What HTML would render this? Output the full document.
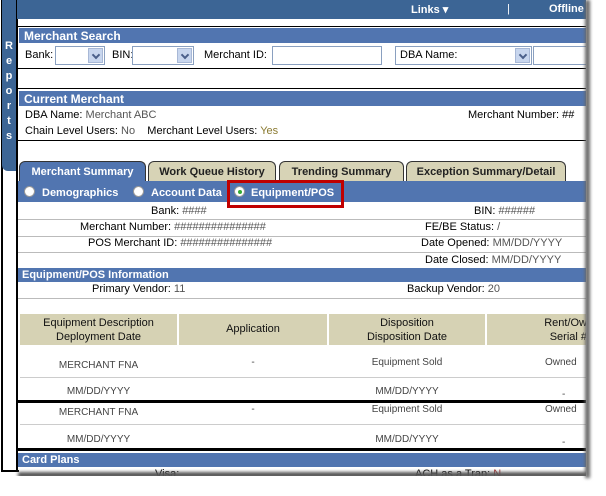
<!DOCTYPE html>
<html><head><style>
*{margin:0;padding:0;box-sizing:border-box}
body{width:606px;height:496px;background:#fff;position:relative;overflow:hidden;font-family:"Liberation Sans",Arial,sans-serif;font-size:11px;color:#000}
.a{position:absolute;white-space:nowrap}
.blue{background:#5175b0;color:#fff;font-weight:bold;font-size:11px}
.top{background:#3c6595}
.b{font-weight:bold}
.g{color:#555}
.sel{position:absolute;height:19px;border:1px solid #8aa0c0;background:#fff}
.sel i{position:absolute;right:1px;top:1px;width:15px;height:15px;background:#c8d6ee;border:1px solid #a8b8d6}
.sel i:after{content:"";position:absolute;left:4px;top:3px;width:4px;height:4px;border-right:2px solid #4a5f8a;border-bottom:2px solid #4a5f8a;transform:rotate(45deg)}
.inp{position:absolute;height:19px;border:1px solid #8aa0c0;background:#fff}
.hl{position:absolute;height:1px;background:#bbb}
.tab{position:absolute;top:161px;height:21px;background:#d7d3b6;border:1px solid #333;border-bottom:none;border-radius:6px 6px 0 0;font-weight:bold;font-size:11px;text-align:center;line-height:20px;color:#222}
.rad{position:absolute;top:186px;width:11px;height:11px;border-radius:50%;background:#fff;border:1px solid #999}
.th{position:absolute;top:314px;height:31px;background:#d6d2b4;text-align:center;font-size:11px;line-height:14px;padding-top:2px;color:#111}
.c{position:absolute;text-align:center;font-size:10px;color:#444}
.bl{position:absolute;height:3px;background:#000;left:18px;width:568px}
</style></head><body>
<div class="a" style="left:1px;top:0;width:2px;height:472px;background:#000"></div>
<div class="a" style="left:1px;top:470px;width:18px;height:2px;background:#000"></div>
<div class="a top" style="left:2px;top:0;width:14px;height:171px;border-radius:0 0 0 6px"></div>
<div class="a" style="left:3px;top:39px;width:12px;color:#fff;font-weight:bold;font-size:11px;line-height:15px;text-align:center;white-space:normal">R<br>e<br>p<br>o<br>r<br>t<br>s</div>
<div class="a" style="left:16px;top:0;width:2px;height:472px;background:#000"></div>
<div class="a top" style="left:17px;top:0;width:570px;height:19px"></div>
<div class="a b" style="left:411px;top:3px;color:#fff;font-size:11px">Links &#9662;</div>
<div class="a" style="left:507px;top:3px;color:#fff">|</div>
<div class="a b" style="left:549px;top:3px;color:#fff;font-size:11px">Offline</div>
<div class="a" style="left:17px;top:26px;width:570px;height:43px;border:1px solid #000;border-right:none"></div>
<div class="a blue" style="left:19px;top:28px;width:568px;height:15px;padding:1px 5px;font-size:12px">Merchant Search</div>
<div class="a" style="left:25px;top:49px">Bank:</div>
<div class="sel" style="left:55px;top:46px;width:50px"><i></i></div>
<div class="a" style="left:112px;top:49px">BIN:</div>
<div class="sel" style="left:132px;top:46px;width:62px"><i></i></div>
<div class="a" style="left:204px;top:49px">Merchant ID:</div>
<div class="inp" style="left:272px;top:46px;width:110px"></div>
<div class="sel" style="left:395px;top:46px;width:137px"><i></i></div>
<div class="a" style="left:400px;top:49px">DBA Name:</div>
<div class="inp" style="left:533px;top:46px;width:60px"></div>
<div class="a" style="left:17px;top:88px;width:570px;height:53px;border:1px solid #000;border-right:none"></div>
<div class="a blue" style="left:19px;top:91px;width:568px;height:15px;padding:1px 5px;font-size:12px">Current Merchant</div>
<div class="a" style="left:25px;top:109px">DBA Name: <span class="g">Merchant ABC</span></div>
<div class="a" style="left:468px;top:109px">Merchant Number: ##</div>
<div class="a" style="left:25px;top:125px">Chain Level Users: <span class="g">No</span>&nbsp;&nbsp;&nbsp; Merchant Level Users: <span style="color:#8a7a30">Yes</span></div>
<div class="tab" style="left:19px;width:127px;background:#5175b0;color:#fff">Merchant Summary</div>
<div class="tab" style="left:148px;width:128px">Work Queue History</div>
<div class="tab" style="left:279px;width:125px">Trending Summary</div>
<div class="tab" style="left:406px;width:160px">Exception Summary/Detail</div>
<div class="a blue" style="left:18px;top:181px;width:569px;height:21px"></div>
<div class="rad" style="left:24px"></div><div class="a b" style="left:42px;top:187px;color:#fff">Demographics</div>
<div class="rad" style="left:133px"></div><div class="a b" style="left:151px;top:187px;color:#fff">Account Data</div>
<div class="rad" style="left:234px"></div><div class="a" style="left:238px;top:190px;width:4px;height:4px;border-radius:50%;background:#3a3"></div>
<div class="a b" style="left:251px;top:187px;color:#fff">Equipment/POS</div>
<div class="a" style="left:227px;top:180px;width:117px;height:28px;border:3px solid #c00000"></div>
<div class="a" style="left:151px;top:205px">Bank: <span class="g">####</span></div>
<div class="a" style="left:474px;top:205px">BIN: <span class="g">######</span></div>
<div class="hl" style="left:18px;top:219px;width:568px"></div>
<div class="a" style="left:80px;top:221px">Merchant Number: <span class="g">###############</span></div>
<div class="a" style="left:425px;top:221px">FE/BE Status: <span class="g">/</span></div>
<div class="hl" style="left:18px;top:236px;width:568px"></div>
<div class="a" style="left:88px;top:237px">POS Merchant ID: <span class="g">###############</span></div>
<div class="a" style="left:421px;top:237px">Date Opened: <span class="g">MM/DD/YYYY</span></div>
<div class="hl" style="left:18px;top:252px;width:568px"></div>
<div class="a" style="left:425px;top:254px">Date Closed: <span class="g">MM/DD/YYYY</span></div>
<div class="a blue" style="left:18px;top:268px;width:569px;height:14px;padding:0 4px;line-height:14px">Equipment/POS Information</div>
<div class="a" style="left:92px;top:283px">Primary Vendor: <span class="g">11</span></div>
<div class="a" style="left:407px;top:283px">Backup Vendor: <span class="g">20</span></div>
<div class="hl" style="left:18px;top:298px;width:568px"></div>
<div class="th" style="left:20px;width:157px">Equipment Description<br>Deployment Date</div>
<div class="th" style="left:179px;width:148px;line-height:30px;padding:0">Application</div>
<div class="th" style="left:329px;width:156px">Disposition<br>Disposition Date</div>
<div class="th" style="left:487px;width:100px;text-align:right">Rent/Ow<br>Serial #</div>
<div class="c" style="left:20px;width:157px;top:360px">MERCHANT FNA</div>
<div class="c" style="left:179px;width:148px;top:357px">-</div>
<div class="c" style="left:329px;width:156px;top:357px">Equipment Sold</div>
<div class="c" style="left:545px;top:357px">Owned</div>
<div class="hl" style="left:20px;top:377px;width:566px;background:#ccc"></div>
<div class="c" style="left:20px;width:157px;top:386px">MM/DD/YYYY</div>
<div class="c" style="left:329px;width:156px;top:386px">MM/DD/YYYY</div>
<div class="c" style="left:562px;top:389px">-</div>
<div class="bl" style="top:400px"></div>
<div class="c" style="left:20px;width:157px;top:407px">MERCHANT FNA</div>
<div class="c" style="left:179px;width:148px;top:404px">-</div>
<div class="c" style="left:329px;width:156px;top:404px">Equipment Sold</div>
<div class="c" style="left:545px;top:404px">Owned</div>
<div class="hl" style="left:20px;top:424px;width:566px;background:#ccc"></div>
<div class="c" style="left:20px;width:157px;top:434px">MM/DD/YYYY</div>
<div class="c" style="left:329px;width:156px;top:434px">MM/DD/YYYY</div>
<div class="c" style="left:562px;top:437px">-</div>
<div class="bl" style="top:448px"></div>
<div class="a blue" style="left:18px;top:453px;width:569px;height:14px;padding:0 4px;line-height:14px">Card Plans</div>
<div class="a" style="left:155px;top:468px">Visa:</div>
<div class="a" style="left:415px;top:468px">ACH as a Trap: <span style="color:#a33">N</span></div>
<div class="a" style="left:18px;top:472px;width:575px;height:6px;background:#555;filter:blur(1.5px)"></div>
<div class="a" style="left:0;top:476px;width:606px;height:20px;background:#fff"></div>
<div class="a" style="left:586px;top:0;width:20px;height:496px;background:#fff"></div>
<div class="a" style="left:585px;top:0;width:5px;height:478px;background:#666;filter:blur(1.5px)"></div>
</body></html>
